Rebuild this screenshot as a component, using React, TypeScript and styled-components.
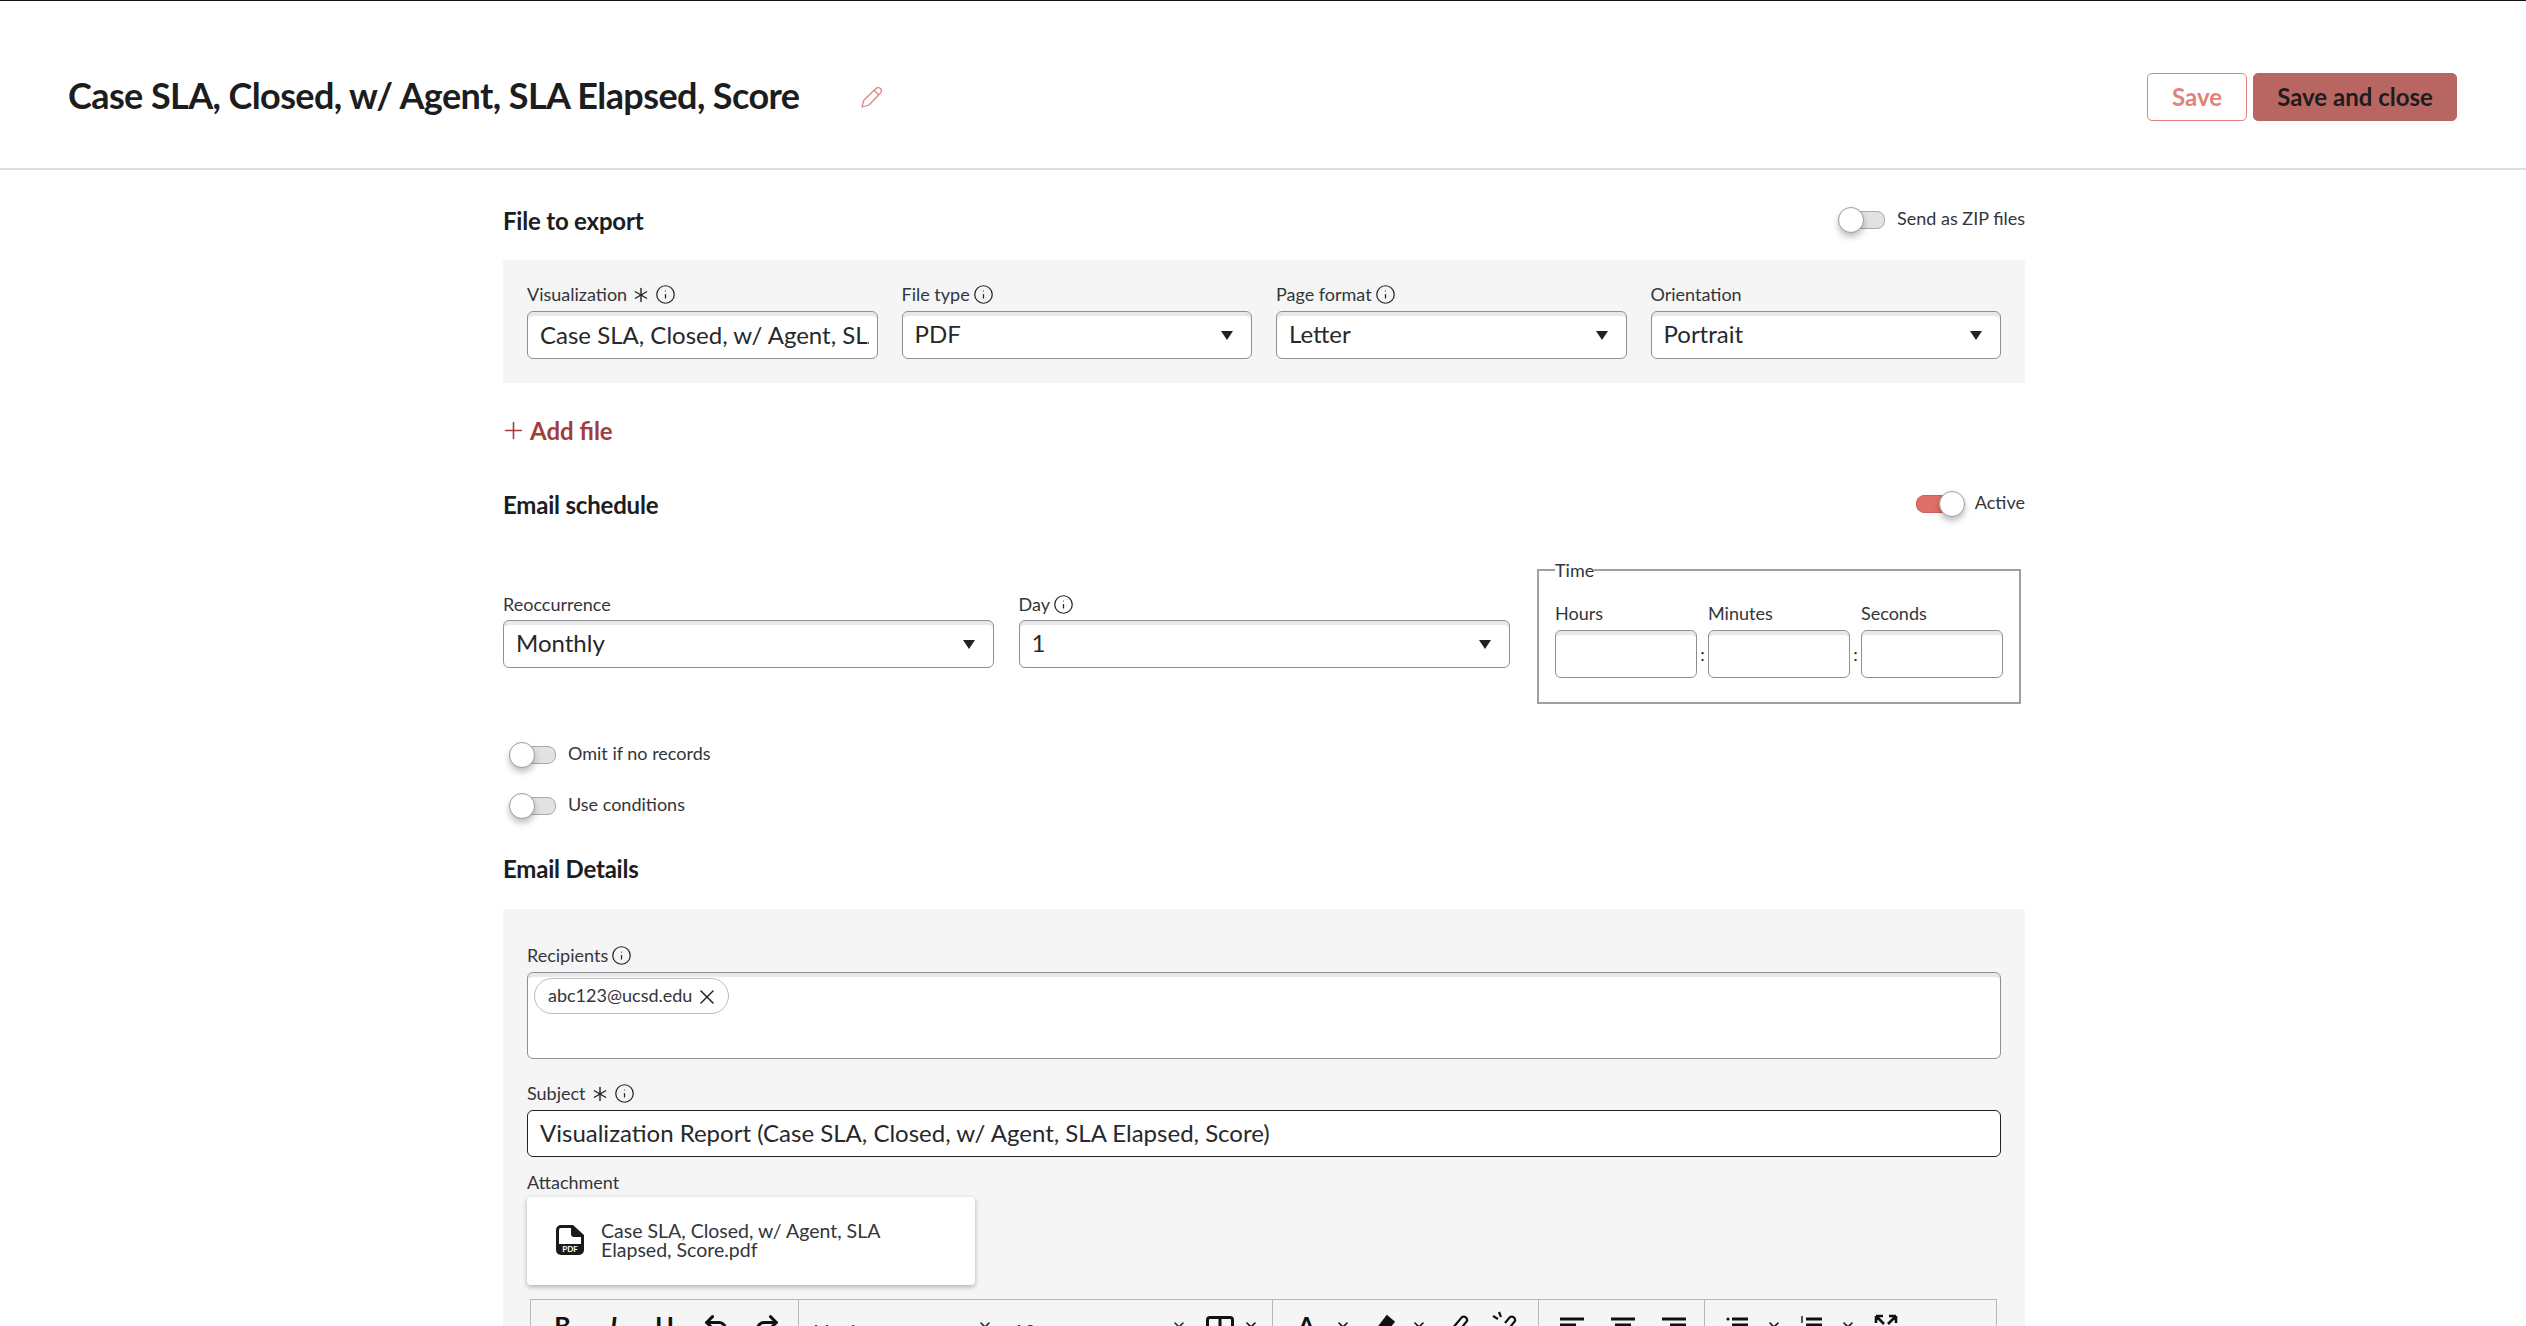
import React from "react";
import styled, { createGlobalStyle } from "styled-components";
import { Asterisk, ChevronDown, Info, Plus, Undo2, Redo2, X } from "lucide-react";

const GlobalStyle = createGlobalStyle`
  html, body {
    margin: 0;
    height: 100%;
    overflow: hidden;
    background: #fff;
  }
  body {
    font-family: Lato, "Open Sans", sans-serif;
    color: #26282b;
  }
  * {
    box-sizing: border-box;
  }
`;

const Page = styled.div`
  height: 1326px;
  overflow: hidden;
  border-top: 1px solid #1a0f0f;
`;

const Header = styled.header`
  height: 169px;
  padding: 24px 69px 0 68px;
  display: flex;
  align-items: center;
  justify-content: space-between;
  border-bottom: 2px solid #dedede;
`;

const TitleGroup = styled.div`
  display: flex;
  align-items: center;
  gap: 62px;
`;

const Title = styled.h1`
  margin: 0;
  padding-bottom: 3px;
  font-size: 36px;
  line-height: 44px;
  font-weight: 700;
  letter-spacing: -0.6px;
  color: #1b1d20;
`;

const Actions = styled.div`
  display: flex;
  gap: 6px;
`;

const Button = styled.button<{ $primary?: boolean }>`
  height: 48px;
  width: ${p => (p.$primary ? "204px" : "100px")};
  font-family: inherit;
  font-size: 24px;
  font-weight: 700;
  border-radius: 5px;
  border: 1px solid ${p => (p.$primary ? "#b86662" : "#e2827b")};
  background: ${p => (p.$primary ? "#b86662" : "#fff")};
  color: ${p => (p.$primary ? "#1d1d1d" : "#e2827b")};
`;

const Main = styled.main`
  width: 1522px;
  margin-left: 503px;
`;

const SectionHead = styled.div<{ $top: number }>`
  margin-top: ${p => p.$top}px;
  display: flex;
  align-items: flex-start;
  justify-content: space-between;
`;

const Heading = styled.h2`
  margin: -1px 0 1px;
  font-size: 24px;
  line-height: 30px;
  font-weight: 700;
  letter-spacing: -0.2px;
  color: #1b1d20;
`;

const ToggleRow = styled.label`
  display: flex;
  align-items: center;
  gap: 12px;
  height: 24px;
  font-size: 18px;
  color: #33353a;
`;

const ToggleText = styled.span`
  margin-top: -2px;
`;

const Switch = styled.span<{ $on?: boolean }>`
  position: relative;
  display: block;
  width: 47px;
  height: 24px;

  &::before {
    content: "";
    position: absolute;
    left: ${p => (p.$on ? "0" : "10px")};
    right: 0;
    top: 4px;
    height: 16px;
    border-radius: 8px;
    background: ${p => (p.$on ? "#df6f66" : "#e2e2e4")};
    border: 1px solid ${p => (p.$on ? "#c9625a" : "#a9a9ad")};
  }

  &::after {
    content: "";
    position: absolute;
    top: 0;
    left: ${p => (p.$on ? "23px" : "0")};
    width: 24px;
    height: 24px;
    border-radius: 50%;
    background: #fff;
    border: 1px solid #9b9ca1;
    box-shadow: 0 4px 6px rgba(0, 0, 0, 0.25);
  }
`;

const Toggle: React.FC<{ on?: boolean; children: React.ReactNode }> = ({ on, children }) => (
  <ToggleRow>
    <Switch $on={on} />
    <ToggleText>{children}</ToggleText>
  </ToggleRow>
);

const Panel = styled.section`
  margin-top: 23px;
  padding: 24px;
  background: #f5f5f5;
`;

const FileGrid = styled.div`
  display: grid;
  grid-template-columns: repeat(4, 1fr);
  gap: 24px;
`;

const Label = styled.div`
  display: flex;
  align-items: center;
  gap: 3px;
  height: 22px;
  margin-bottom: 5px;
  padding-bottom: 1px;
  font-size: 18px;
  line-height: 21px;
  color: #33353a;
`;

const Field = styled.div``;

const fieldBox = `
  width: 100%;
  height: 48px;
  background: #fff;
  border: 1px solid #8f9096;
  border-radius: 6px;
  box-shadow: inset 0 5px 1px -1px #e8e8e8;
  font-family: inherit;
  font-size: 24px;
  color: #26282b;
`;

const TextInput = styled.input`
  ${fieldBox}
  display: block;
  padding: 0 8px 1px 12px;
  outline: none;
`;

const SelectBox = styled.div`
  ${fieldBox}
  display: flex;
  align-items: center;
  justify-content: space-between;
  padding: 0 18px 3px 12px;
`;

const Caret = styled.span`
  width: 0;
  height: 0;
  margin-top: 3px;
  border-left: 6px solid transparent;
  border-right: 6px solid transparent;
  border-top: 9px solid #222;
`;

const AddFile = styled.div`
  margin-top: 32px;
  display: flex;
  align-items: center;
  gap: 3px;
  height: 30px;
  margin-left: -3px;
  font-size: 24px;
  font-weight: 700;
  color: #a33c3a;
`;

const ScheduleRow = styled.div`
  margin-top: 36px;
  display: grid;
  grid-template-columns: 491px 491px 487px;
  column-gap: 24.5px;
  align-items: start;
`;

const ScheduleField = styled.div`
  margin-top: 37px;
`;

const ScheduleLabel = styled(Label)`
  margin-bottom: 4px;
`;

const TimeSet = styled.fieldset`
  margin: 3px 0 0 3px;
  padding: 0 16px 24px;
  border: 2px solid #a0a0a0;
  min-width: 0;
`;

const TimeLegend = styled.legend`
  padding: 0;
  font-size: 18px;
  line-height: 20px;
  color: #33353a;
`;

const TimeRow = styled.div`
  margin-top: 23px;
  display: grid;
  grid-template-columns: 1fr 11px 1fr 11px 1fr;
`;

const Colon = styled.span`
  align-self: end;
  height: 48px;
  line-height: 48px;
  text-align: center;
  font-size: 18px;
`;

const Options = styled.div`
  margin-top: 38px;
  padding-left: 6px;
  display: flex;
  flex-direction: column;
  gap: 27px;
`;

const DetailPanel = styled(Panel)`
  margin-top: 24px;
  height: 600px;
  padding-top: 36px;
`;

const RecipientBox = styled.div`
  height: 87px;
  padding: 5px 6px;
  background: #fff;
  border: 1px solid #8f9096;
  border-radius: 6px;
  box-shadow: inset 0 5px 1px -1px #e8e8e8;
`;

const Chip = styled.span`
  display: inline-flex;
  align-items: center;
  gap: 3px;
  height: 36px;
  padding: 0 9px 2px 13px;
  background: #fff;
  border: 1px solid #bcbcbc;
  border-radius: 18px;
  font-size: 18px;
  color: #33353a;
`;

const ChipClose = styled(X)`
  margin-top: 3px;
`;

const SubjectField = styled.div`
  margin-top: 24px;
`;

const SubjectInput = styled(TextInput)`
  height: 47px;
  padding-bottom: 3px;
  border-color: #222;
  box-shadow: none;
`;

const AttachmentField = styled.div`
  margin-top: 15px;
`;

const AttachmentLabel = styled(Label)`
  margin-bottom: 3px;
`;

const AttachmentCard = styled.div`
  width: 448px;
  height: 88px;
  padding: 0 60px 2px 29px;
  display: flex;
  align-items: center;
  gap: 17px;
  background: #fff;
  border-radius: 4px;
  box-shadow: 0 2px 5px rgba(0, 0, 0, 0.28);
  font-size: 19.5px;
  line-height: 19px;
  color: #33353a;

  svg {
    flex-shrink: 0;
  }
`;

const Toolbar = styled.div`
  margin: 14px 4px 0 3px;
  display: flex;
  height: 80px;
  border: 1px solid #b9b9bd;
  border-bottom: 0;
`;

const ToolGroup = styled.div<{ $width: number; $pad: number }>`
  width: ${p => p.$width}px;
  padding: 10px 0 0 ${p => p.$pad}px;
  display: flex;
  align-items: flex-start;
  border-right: 1px solid #b9b9bd;

  &:last-child {
    border-right: 0;
  }
`;

const Tool = styled.span<{ $width: number; $italic?: boolean; $end?: boolean }>`
  width: ${p => p.$width}px;
  height: 30px;
  display: flex;
  justify-content: ${p => (p.$end ? "flex-end" : "center")};
  align-items: flex-start;
  font-size: 25px;
  line-height: 30px;
  font-weight: 700;
  font-style: ${p => (p.$italic ? "italic" : "normal")};
  color: #111;
`;

const ToolChevron = styled(ChevronDown)`
  margin-top: 7px;
`;

const ArrowTool = styled.span`
  margin-top: 2px;
`;

const ToolSelect = styled.span<{ $width: number }>`
  width: ${p => p.$width}px;
  display: flex;
  justify-content: space-between;
  font-size: 20px;
  line-height: 42px;
  height: 30px;
  color: #26282b;
`;

const PdfIcon = () => (
  <svg width="28" height="30" viewBox="0 0 28 30">
    <path d="M5 0h12l11 10v15a5 5 0 0 1-5 5H5a5 5 0 0 1-5-5V5a5 5 0 0 1 5-5z" fill="#1a1a1a" />
    <path d="M5 3h10v6a3 3 0 0 0 3 3h7v7H3V5a2 2 0 0 1 2-2z" fill="#fff" />
    <text x="14" y="27" textAnchor="middle" fontSize="8" fontWeight="700" fill="#fff" fontFamily="Lato, sans-serif">PDF</text>
  </svg>
);

const PencilIcon = () => (
  <svg width="22" height="22" viewBox="0 0 22 22" fill="none" stroke="#e2827b" strokeWidth="1.3" strokeLinejoin="round">
    <path d="M1 21l2-7L15 2.5a3 3 0 0 1 4.5 4.5L8 19z" />
    <path d="M13.2 4.3l4.5 4.5" />
  </svg>
);

const Glyph: React.FC<{ children: React.ReactNode; w?: number }> = ({ children, w = 28 }) => (
  <svg width={w} height="30" viewBox={`0 0 ${w} 30`} fill="none" stroke="#111" strokeWidth="3">
    {children}
  </svg>
);

const RequiredMark = styled(Asterisk)`
  margin: 0 -2px;
`;

const Req = () => <RequiredMark size={26} strokeWidth={1.3} color="#222" />;
const Hint = () => <Info size={21} strokeWidth={1.4} color="#222" />;

const Select: React.FC<{ label: React.ReactNode; value: string }> = ({ label, value }) => (
  <Field>
    <Label>{label}</Label>
    <SelectBox>
      {value}
      <Caret />
    </SelectBox>
  </Field>
);

const TimeField: React.FC<{ label: string }> = ({ label }) => (
  <Field>
    <Label>{label}</Label>
    <TextInput />
  </Field>
);

const title = "Case SLA, Closed, w/ Agent, SLA Elapsed, Score";

export default function App() {
  return (
    <Page>
      <GlobalStyle />
      <Header>
        <TitleGroup>
          <Title>{title}</Title>
          <PencilIcon />
        </TitleGroup>
        <Actions>
          <Button>Save</Button>
          <Button $primary>Save and close</Button>
        </Actions>
      </Header>
      <Main>
        <SectionHead $top={37}>
          <Heading>File to export</Heading>
          <Toggle>Send as ZIP files</Toggle>
        </SectionHead>
        <Panel>
          <FileGrid>
            <Field>
              <Label>Visualization <Req /><Hint /></Label>
              <TextInput readOnly value={title} />
            </Field>
            <Select label={<>File type <Hint /></>} value="PDF" />
            <Select label={<>Page format <Hint /></>} value="Letter" />
            <Select label="Orientation" value="Portrait" />
          </FileGrid>
        </Panel>
        <AddFile>
          <Plus size={27} strokeWidth={1.4} />
          Add file
        </AddFile>

        <SectionHead $top={46}>
          <Heading>Email schedule</Heading>
          <Toggle on>Active</Toggle>
        </SectionHead>
        <ScheduleRow>
          <ScheduleField>
            <ScheduleLabel>Reoccurrence</ScheduleLabel>
            <SelectBox>Monthly<Caret /></SelectBox>
          </ScheduleField>
          <ScheduleField>
            <ScheduleLabel>Day <Hint /></ScheduleLabel>
            <SelectBox>1<Caret /></SelectBox>
          </ScheduleField>
          <TimeSet>
            <TimeLegend>Time</TimeLegend>
            <TimeRow>
              <TimeField label="Hours" />
              <Colon>:</Colon>
              <TimeField label="Minutes" />
              <Colon>:</Colon>
              <TimeField label="Seconds" />
            </TimeRow>
          </TimeSet>
        </ScheduleRow>
        <Options>
          <Toggle>Omit if no records</Toggle>
          <Toggle>Use conditions</Toggle>
        </Options>

        <SectionHead $top={38}>
          <Heading>Email Details</Heading>
        </SectionHead>
        <DetailPanel>
          <Label>Recipients <Hint /></Label>
          <RecipientBox>
            <Chip>
              abc123@ucsd.edu
              <ChipClose size={24} strokeWidth={1.5} color="#222" />
            </Chip>
          </RecipientBox>
          <SubjectField>
            <Label>Subject <Req /><Hint /></Label>
            <SubjectInput readOnly value={`Visualization Report (${title})`} />
          </SubjectField>
          <AttachmentField>
            <AttachmentLabel>Attachment</AttachmentLabel>
            <AttachmentCard>
              <PdfIcon />
              <span>Case SLA, Closed, w/ Agent, SLA Elapsed, Score.pdf</span>
            </AttachmentCard>
          </AttachmentField>
          <Toolbar>
            <ToolGroup $width={268} $pad={6}>
              <Tool $width={51}>B</Tool>
              <Tool $width={51} $italic>I</Tool>
              <Tool $width={51}>U</Tool>
              <Tool $width={51}><ArrowTool><Undo2 size={28} strokeWidth={2.6} /></ArrowTool></Tool>
              <Tool $width={51}><ArrowTool><Redo2 size={28} strokeWidth={2.6} /></ArrowTool></Tool>
            </ToolGroup>
            <ToolGroup $width={475} $pad={16}>
              <ToolSelect $width={178}>Verdana<ToolChevron size={16} strokeWidth={2.4} /></ToolSelect>
              <Tool $width={20} />
              <ToolSelect $width={174}>10pt<ToolChevron size={16} strokeWidth={2.4} /></ToolSelect>
              <Tool $width={47} $end>
                <Glyph w={28}>
                  <rect x="1.5" y="7.5" width="25" height="22" rx="2.5" />
                  <path d="M14 8v21M2 18h24" />
                </Glyph>
              </Tool>
              <Tool $width={34}><ToolChevron size={16} strokeWidth={2.4} /></Tool>
            </ToolGroup>
            <ToolGroup $width={266} $pad={14}>
              <Tool $width={38}>A</Tool>
              <Tool $width={36}><ToolChevron size={16} strokeWidth={2.4} /></Tool>
              <Tool $width={42}>
                <Glyph w={28}>
                  <path d="M9 20L19 7l6 5-11 13z" fill="#111" />
                </Glyph>
              </Tool>
              <Tool $width={32}><ToolChevron size={16} strokeWidth={2.4} /></Tool>
              <Tool $width={50}>
                <Glyph w={26}>
                  <path d="M8 26L20 11a3.5 3.5 0 0 0-5-4L5 19" strokeWidth="2.2" />
                </Glyph>
              </Tool>
              <Tool $width={42}>
                <Glyph w={30}>
                  <path d="M12 26L24 11a3.5 3.5 0 0 0-5-4L14 13M2 6l5 3M8 2l2 5" strokeWidth="2.2" />
                </Glyph>
              </Tool>
            </ToolGroup>
            <ToolGroup $width={166} $pad={7}>
              <Tool $width={51}>
                <Glyph w={24}><path d="M0 9h24M0 15h16" /></Glyph>
              </Tool>
              <Tool $width={51}>
                <Glyph w={24}><path d="M0 9h24M4 15h16" /></Glyph>
              </Tool>
              <Tool $width={51}>
                <Glyph w={24}><path d="M0 9h24M8 15h16" /></Glyph>
              </Tool>
            </ToolGroup>
            <ToolGroup $width={291} $pad={13}>
              <Tool $width={37}>
                <Glyph w={22}>
                  <circle cx="2" cy="9" r="1.6" fill="#111" stroke="none" />
                  <path d="M6 9h16M6 15h16" />
                </Glyph>
              </Tool>
              <Tool $width={37}><ToolChevron size={16} strokeWidth={2.4} /></Tool>
              <Tool $width={37}>
                <Glyph w={22}>
                  <path d="M2 6v7" strokeWidth="1.4" />
                  <path d="M6 9h16M6 15h16" />
                </Glyph>
              </Tool>
              <Tool $width={38}><ToolChevron size={16} strokeWidth={2.4} /></Tool>
              <Tool $width={38}>
                <Glyph w={24}>
                  <path d="M2 6h7M2 6v7M2 6l8 8M22 6h-7M22 6v7M22 6l-8 8" strokeWidth="2.6" />
                </Glyph>
              </Tool>
            </ToolGroup>
          </Toolbar>
        </DetailPanel>
      </Main>
    </Page>
  );
}
